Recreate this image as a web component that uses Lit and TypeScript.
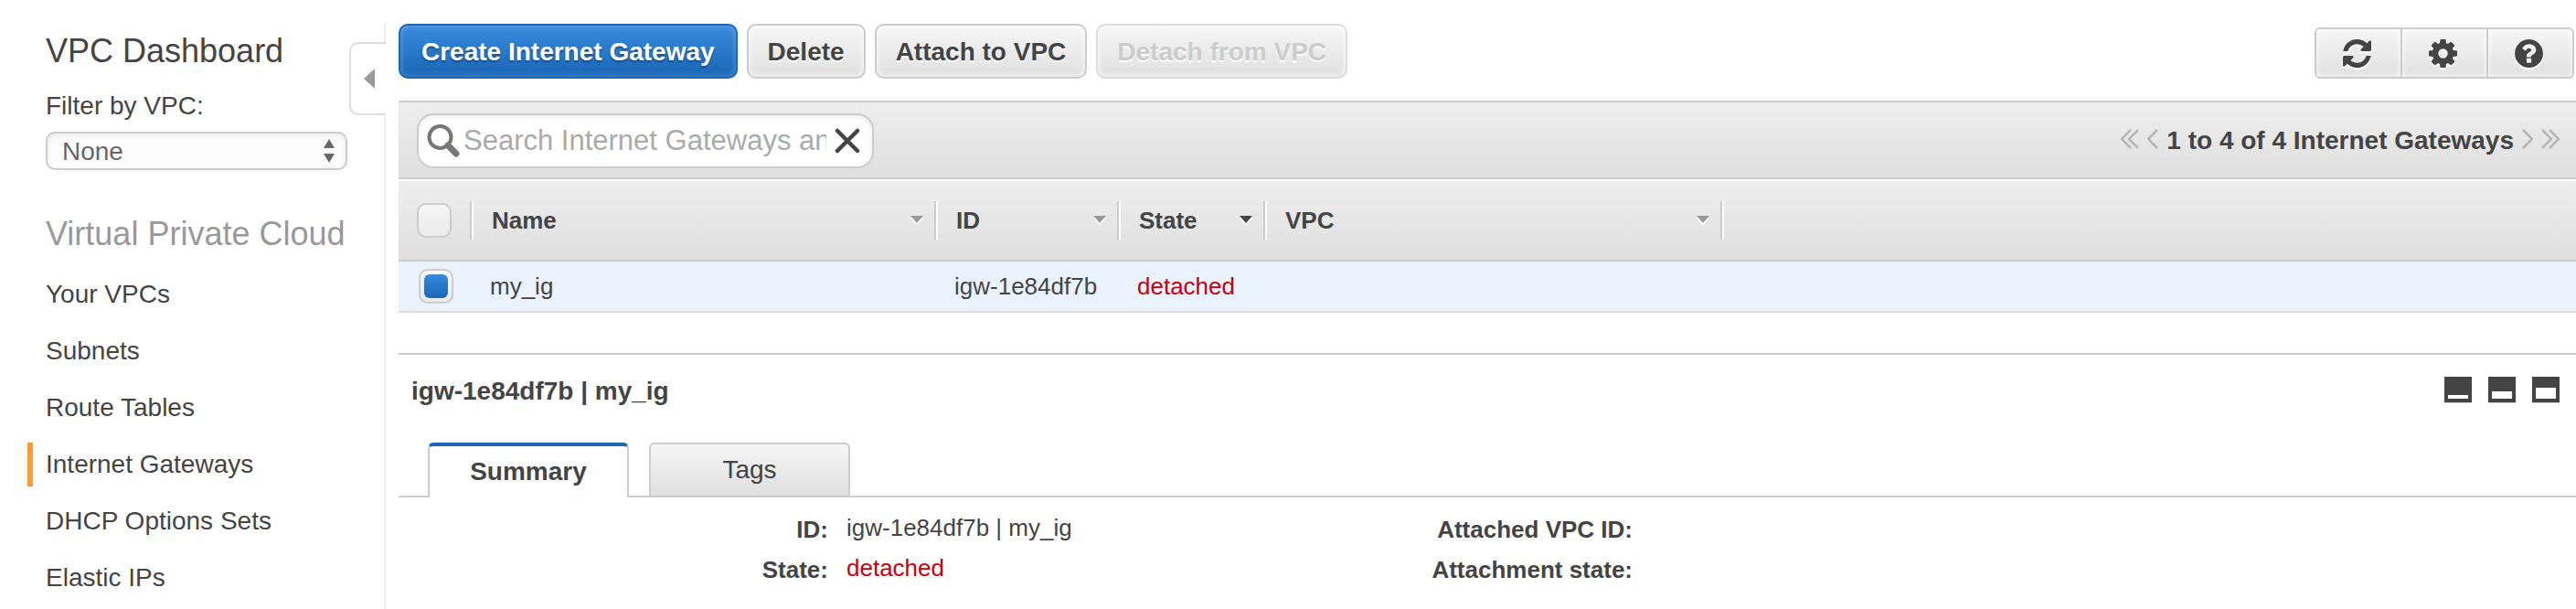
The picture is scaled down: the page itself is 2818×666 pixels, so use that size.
import { LitElement, html, css, svg } from "lit";
import { customElement, state } from "lit/decorators.js";
import { classMap } from "lit/directives/class-map.js";

const REFRESH =
  "M1511 928q0 5-1 7-64 268-268 434.5t-478 166.5q-146 0-282.5-55t-243.5-157l-129 129q-19 19-45 19t-45-19-19-45v-448q0-26 19-45t45-19h448q26 0 45 19t19 45-19 45l-137 137q71 66 161 102t187 36q134 0 250-65t186-179q11-17 53-117 8-23 30-23h192q13 0 22.5 9.5t9.5 22.5zm25-800v448q0 26-19 45t-45 19h-448q-26 0-45-19t-19-45 19-45l138-138q-148-137-349-137-134 0-250 65t-186 179q-11 17-53 117-8 23-30 23h-199q-13 0-22.5-9.5t-9.5-22.5v-7q65-268 270-434.5t480-166.5q146 0 284 55.5t245 156.5l130-129q19-19 45-19t45 19 19 45z";
const GEAR =
  "M1152 896q0-106-75-181t-181-75-181 75-75 181 75 181 181 75 181-75 75-181zm512-109v222q0 12-8 23t-20 13l-185 28q-19 54-39 91 35 50 107 138 10 12 10 25t-9 23q-27 37-99 108t-94 71q-12 0-26-9l-138-108q-44 23-91 38-16 136-29 186-7 28-36 28h-222q-14 0-24.5-8.5t-11.5-21.5l-28-184q-49-16-90-37l-141 107q-10 9-25 9-14 0-25-11-126-114-165-168-7-10-7-23 0-12 8-23 15-21 51-66.5t54-70.5q-27-50-41-99l-183-27q-13-2-21-12.5t-8-23.5v-222q0-12 8-23t19-13l186-28q14-46 39-92-40-57-107-138-10-12-10-24 0-10 9-23 26-36 98.5-107.5t94.5-71.5q13 0 26 10l138 107q44-23 91-38 16-136 29-186 7-28 36-28h222q14 0 24.5 8.5t11.5 21.5l28 184q49 16 90 37l142-107q9-9 24-9 13 0 25 10 129 119 165 170 7 8 7 22 0 12-8 23-15 21-51 66.5t-54 70.5q26 50 41 98l183 28q13 2 21 12.5t8 23.5z";
const HELP =
  "M1024 1376v-192q0-14-9-23t-23-9h-192q-14 0-23 9t-9 23v192q0 14 9 23t23 9h192q14 0 23-9t9-23zm256-672q0-88-55.5-163t-138.5-116-170-41q-243 0-371 213-15 24 8 42l132 100q7 6 19 6 16 0 25-12 53-68 86-92 34-24 86-24 48 0 85.5 26t37.5 59q0 38-20 61t-68 45q-63 28-115.5 86.5t-52.5 125.5v36q0 14 9 23t23 9h192q14 0 23-9t9-23q0-19 21.5-49.5t54.5-49.5q32-18 49-28.5t46-35 44.5-48 28-60.5 12.5-81zm384 192q0 209-103 385.5t-279.5 279.5-385.5 103-385.5-103-279.5-279.5-103-385.5 103-385.5 279.5-279.5 385.5-103 385.5 103 279.5 279.5 103 385.5z";

const reset = css`
  * {
    box-sizing: border-box;
  }
  button,
  input,
  select {
    font: inherit;
    color: inherit;
    margin: 0;
    padding: 0;
    border: 0;
    background: none;
    appearance: none;
    outline-offset: 2px;
  }
  svg {
    display: block;
    flex: none;
  }
`;

@customElement("vpc-sidebar")
class VpcSidebar extends LitElement {
  static styles = [
    reset,
    css`
      :host {
        display: block;
        position: relative;
        flex: 0 0 422px;
        box-sizing: border-box;
        padding: 10px 40px 0 30px;
        border-right: 2px solid #eee;
      }
      .heading {
        margin: 0;
        padding-left: 20px;
        font-size: 36px;
        line-height: 40px;
        font-weight: 400;
        white-space: nowrap;
      }
      .muted {
        margin-top: 50px;
        color: #999;
      }
      .filter {
        display: grid;
        gap: 12px;
        margin-top: 24px;
        padding-left: 20px;
        line-height: 32px;
      }
      .picker {
        display: grid;
        align-items: center;
      }
      .picker > * {
        grid-area: 1 / 1;
      }
      .picker svg {
        justify-self: end;
        margin-right: 14px;
        pointer-events: none;
      }
      .select {
        width: 100%;
        height: 42px;
        padding: 2px 40px 0 16px;
        border: 2px solid #ccc;
        border-radius: 10px;
        background: #fcfcfc;
        box-shadow: inset 0 2px 6px rgba(0, 0, 0, 0.08);
        color: #666;
      }
      .links {
        display: grid;
        gap: 14px;
        margin: 22px 0 0;
        padding: 0;
        list-style: none;
      }
      .link {
        display: block;
        padding-left: 14px;
        border-left: 6px solid transparent;
        line-height: 48px;
        color: inherit;
        text-decoration: none;
      }
      .current {
        border-color: #f93;
      }
      .collapse {
        position: absolute;
        top: 20px;
        right: -2px;
        width: 40px;
        height: 80px;
        padding-left: 14px;
        border: 2px solid #ddd;
        border-right: 0;
        border-radius: 10px 0 0 10px;
        background: #fff;
      }
    `,
  ];

  private links = [
    "Your VPCs",
    "Subnets",
    "Route Tables",
    "Internet Gateways",
    "DHCP Options Sets",
    "Elastic IPs",
  ];

  render() {
    return html`
      <h1 class="heading">VPC Dashboard</h1>
      <button class="collapse" aria-label="Collapse navigation">
        <svg width="12" height="22" viewBox="0 0 12 22"><path d="M12 0V22L0 11Z" fill="#999" /></svg>
      </button>
      <div class="filter">
        <label for="vpc">Filter by VPC:</label>
        <div class="picker">
          <select id="vpc" class="select">
            <option>None</option>
          </select>
          <svg width="12" height="26" viewBox="0 0 12 26">
            <path d="M6 0L12 10H0ZM0 16H12L6 26Z" fill="#666" />
          </svg>
        </div>
      </div>
      <h2 class="heading muted">Virtual Private Cloud</h2>
      <nav>
        <ul class="links">
          ${this.links.map(
            (name) => html`<li>
              <a class=${classMap({ link: true, current: name === "Internet Gateways" })} href="#">${name}</a>
            </li>`
          )}
        </ul>
      </nav>
    `;
  }
}

@customElement("action-bar")
class ActionBar extends LitElement {
  static styles = [
    reset,
    css`
      :host {
        display: flex;
        justify-content: space-between;
        align-items: flex-end;
        padding-right: 2px;
      }
      .actions {
        display: flex;
        gap: 10px;
      }
      .button {
        height: 60px;
        padding: 2px 21px 0;
        border: 2px solid #ccc;
        border-radius: 10px;
        background: linear-gradient(#f6f6f6, #e0e0e0);
        box-shadow: inset 0 0 6px #fff;
        font-weight: 700;
        text-shadow: 0 2px 0 #fff;
        white-space: nowrap;
      }
      .primary {
        padding: 2px 23px 0;
        border-color: #1b66b5;
        background: linear-gradient(#388ade, #1a66b6);
        box-shadow: inset 0 0 6px rgba(255, 255, 255, 0.3);
        color: #fff;
        text-shadow: 0 2px 2px rgba(0, 0, 0, 0.35);
      }
      .button:disabled {
        border-color: #ddd;
        color: #ccc;
      }
      .tools {
        display: flex;
        border: 2px solid #ccc;
        border-radius: 6px;
      }
      .tool {
        display: grid;
        place-items: center;
        width: 94px;
        height: 52px;
        padding-right: 4px;
        background: linear-gradient(#f6f6f6, #e0e0e0);
        box-shadow: inset 0 0 6px #fff;
      }
      .tool + .tool {
        border-left: 2px solid #ccc;
      }
      .tool svg {
        filter: drop-shadow(0 2px 1px #fff);
      }
      .tool:first-child {
        width: 92px;
        border-radius: 4px 0 0 4px;
      }
      .tool:last-child {
        border-radius: 0 4px 4px 0;
      }
    `,
  ];

  private tool(label: string, box: string, path: string) {
    return html`<button class="tool" aria-label=${label}>
      <svg width="31" height="31" viewBox=${box} fill="#444">${svg`<path d=${path} />`}</svg>
    </button>`;
  }

  render() {
    return html`
      <div class="actions">
        <button class="button primary">Create Internet Gateway</button>
        <button class="button">Delete</button>
        <button class="button">Attach to VPC</button>
        <button class="button" disabled>Detach from VPC</button>
      </div>
      <div class="tools">
        ${this.tool("Refresh", "0 0 1536 1536", REFRESH)}
        ${this.tool("Settings", "128 128 1536 1536", GEAR)}
        ${this.tool("Help", "128 128 1536 1536", HELP)}
      </div>
    `;
  }
}

@customElement("filter-bar")
class FilterBar extends LitElement {
  static styles = [
    reset,
    css`
      :host {
        display: flex;
        justify-content: space-between;
        align-items: center;
        height: 86px;
        box-sizing: border-box;
        padding: 2px 18px 0 20px;
        border: solid #ccc;
        border-width: 2px 0;
        background: linear-gradient(#eee, #dfdfdf);
      }
      .search {
        display: flex;
        align-items: center;
        width: 500px;
        height: 60px;
        padding: 0 13px 0 9px;
        border: 2px solid #ccc;
        border-radius: 18px;
        background: #fff;
        box-shadow: inset 0 2px 6px rgba(0, 0, 0, 0.08);
      }
      .input {
        flex: 1;
        min-width: 0;
        margin: 0 9px 0 4px;
        font-size: 31px;
        line-height: 40px;
      }
      .input::placeholder {
        color: #aaa;
        opacity: 1;
      }
      .pages {
        display: flex;
        align-items: center;
        gap: 9px;
        font-weight: 700;
        line-height: 32px;
      }
      .step {
        padding-bottom: 4px;
      }
    `,
  ];

  private step(label: string, width: number, path: string) {
    return html`<button class="step" aria-label=${label}>
      <svg width=${width} height="22" viewBox="0 0 ${width} 22" fill="none" stroke="#b5b5b5" stroke-width="2.500">
        ${svg`<path d=${path} />`}
      </svg>
    </button>`;
  }

  render() {
    return html`
      <div class="search">
        <svg width="36" height="36" viewBox="0 0 36 36" fill="none" stroke="#777">
          <circle cx="14.500" cy="14" r="12" stroke-width="4" />
          <path d="M23 23L32 32" stroke-width="7" stroke-linecap="round" />
        </svg>
        <input
          class="input"
          type="text"
          aria-label="Search Internet Gateways"
          placeholder="Search Internet Gateways and their properties"
        />
        <button aria-label="Clear search">
          <svg width="28" height="28" viewBox="0 0 28 28" stroke="#444" stroke-width="4.500" stroke-linecap="round">
            <path d="M3 3L25 25M25 3L3 25" />
          </svg>
        </button>
      </div>
      <div class="pages">
        ${this.step("First page", 20, "M11 1L1 11L11 21M19 1L9 11L19 21")}
        ${this.step("Previous page", 12, "M11 1L1 11L11 21")}
        <span>1 to 4 of 4 Internet Gateways</span>
        ${this.step("Next page", 12, "M1 1L11 11L1 21")}
        ${this.step("Last page", 20, "M1 1L11 11L1 21M9 1L19 11L9 21")}
      </div>
    `;
  }
}

@customElement("gateway-table")
class GatewayTable extends LitElement {
  static styles = [
    reset,
    css`
      :host {
        display: block;
        font-size: 26px;
      }
      .table {
        width: 100%;
        table-layout: fixed;
        border-collapse: separate;
        border-spacing: 0;
        text-align: left;
      }
      .pick {
        width: 82px;
      }
      .name {
        width: 508px;
      }
      .id {
        width: 200px;
      }
      .state {
        width: 160px;
      }
      .vpc {
        width: 500px;
      }
      .head {
        height: 90px;
        padding: 0;
        border-top: 2px solid #fff;
        border-bottom: 2px solid #ccc;
        background: linear-gradient(#eee, #dfdfdf);
      }
      .slot {
        display: flex;
        align-items: center;
        height: 42px;
        margin-right: 2px;
        border-right: 2px solid #ccc;
        box-shadow: 2px 0 0 #fff;
      }
      .first {
        padding-left: 20px;
      }
      .sort {
        display: flex;
        flex: 1;
        justify-content: space-between;
        align-items: center;
        padding: 0 11px 0 20px;
        font-weight: 700;
        line-height: 32px;
        text-align: left;
      }
      .cell {
        height: 56px;
        padding: 0 0 0 18px;
        border-bottom: 2px solid #ddd;
        background: #eaf2fe;
        line-height: 32px;
      }
      .cell.choose {
        padding-left: 22px;
      }
      .check {
        display: grid;
        place-items: center;
        width: 38px;
        height: 38px;
        border: 2px solid #ccc;
        border-radius: 10px;
        background: linear-gradient(#f6f6f6, #eaeaea);
      }
      .check:checked::before {
        content: "";
        width: 26px;
        height: 26px;
        border-radius: 6px;
        background: linear-gradient(#388ade, #1a66b6);
      }
      .detached {
        color: #c7000b;
      }
    `,
  ];

  private column(name: string, sorted = false) {
    return html`<th class="head" scope="col">
      <div class="slot">
        <button class="sort">
          ${name}
          <svg width="16" height="12" viewBox="0 0 16 12">
            <path d="M1 3H15L8 12Z" fill="#fff" />
            <path d="M1 1H15L8 9Z" fill=${sorted ? "#444" : "#999"} />
          </svg>
        </button>
      </div>
    </th>`;
  }

  render() {
    return html`<table class="table">
      <colgroup>
        <col class="pick" />
        <col class="name" />
        <col class="id" />
        <col class="state" />
        <col class="vpc" />
        <col />
      </colgroup>
      <thead>
        <tr>
          <th class="head" scope="col">
            <div class="slot first"><input class="check" type="checkbox" aria-label="Select all" /></div>
          </th>
          ${this.column("Name")} ${this.column("ID")} ${this.column("State", true)} ${this.column("VPC")}
          <td class="head"></td>
        </tr>
      </thead>
      <tbody>
        <tr>
          <td class="cell choose"><input class="check" type="checkbox" checked aria-label="Select my_ig" /></td>
          <td class="cell">my_ig</td>
          <td class="cell">igw-1e84df7b</td>
          <td class="cell detached">detached</td>
          <td class="cell"></td>
          <td class="cell"></td>
        </tr>
      </tbody>
    </table>`;
  }
}

@customElement("gateway-details")
class GatewayDetails extends LitElement {
  static styles = [
    reset,
    css`
      :host {
        display: block;
        padding-top: 24px;
        border-top: 2px solid #ccc;
      }
      .top {
        display: flex;
        justify-content: space-between;
        padding: 0 18px 0 14px;
      }
      .title {
        margin: 0;
        font-size: 28px;
        line-height: 32px;
      }
      .panes {
        display: flex;
        align-items: flex-start;
        gap: 18px;
      }
      .tabs {
        display: flex;
        gap: 22px;
        height: 60px;
        margin-top: 40px;
        padding-left: 32px;
        border-bottom: 2px solid #ccc;
      }
      .tab {
        width: 220px;
        height: 58px;
        border: 2px solid #ccc;
        border-bottom: 0;
        border-radius: 6px 6px 0 0;
        background: linear-gradient(#f6f6f6, #dfdfdf);
      }
      .active {
        height: 60px;
        border-top: 4px solid #1b66b5;
        background: #fff;
        font-weight: 700;
      }
      .facts {
        display: flex;
        padding-top: 13px;
        font-size: 26px;
      }
      .list {
        display: grid;
        flex: 0 1 880px;
        grid-template-columns: 470px 1fr;
        column-gap: 20px;
        margin: 0;
      }
      .term {
        font-weight: 700;
        line-height: 44px;
        text-align: right;
      }
      .value {
        margin: 0;
        line-height: 40px;
      }
      .detached {
        color: #c7000b;
      }
    `,
  ];

  @state() private tab = "Summary";

  private pane(label: string, height: number) {
    return html`<button aria-label=${label}>
      <svg width="30" height="29" viewBox="0 0 30 29">
        <rect width="30" height="29" fill="#ccc" />
        <rect width="30" height="28" fill="#444" />
        ${svg`<rect x="4" y=${24 - height} width="22" height=${height} fill="#fff" />`}
      </svg>
    </button>`;
  }

  render() {
    return html`
      <div class="top">
        <h2 class="title">igw-1e84df7b | my_ig</h2>
        <div class="panes">
          ${this.pane("Minimize panel", 4)} ${this.pane("Split panel", 8)} ${this.pane("Maximize panel", 12)}
        </div>
      </div>
      <div class="tabs" role="tablist">
        ${["Summary", "Tags"].map(
          (name) => html`<button
            class=${classMap({ tab: true, active: name === this.tab })}
            role="tab"
            aria-selected=${name === this.tab}
            @click=${() => (this.tab = name)}
          >
            ${name}
          </button>`
        )}
      </div>
      <div class="facts">
        <dl class="list">
          <dt class="term">ID:</dt>
          <dd class="value">igw-1e84df7b | my_ig</dd>
          <dt class="term">State:</dt>
          <dd class="value detached">detached</dd>
        </dl>
        <dl class="list">
          <dt class="term">Attached VPC ID:</dt>
          <dd class="value"></dd>
          <dt class="term">Attachment state:</dt>
          <dd class="value"></dd>
        </dl>
      </div>
    `;
  }
}

@customElement("app-root")
class AppRoot extends LitElement {
  static styles = [
    reset,
    css`
      :host {
        display: flex;
        gap: 14px;
        box-sizing: border-box;
        min-height: 100vh;
        padding-top: 26px;
        background: #fff;
        color: #444;
        font-family: "Liberation Sans", Arial, sans-serif;
        font-size: 28px;
      }
      .main {
        flex: 1;
        min-width: 0;
      }
      .bar {
        margin-bottom: 24px;
      }
      .details {
        margin-top: 44px;
      }
    `,
  ];

  render() {
    return html`
      <vpc-sidebar></vpc-sidebar>
      <main class="main">
        <action-bar class="bar"></action-bar>
        <filter-bar></filter-bar>
        <gateway-table></gateway-table>
        <gateway-details class="details"></gateway-details>
      </main>
    `;
  }
}
